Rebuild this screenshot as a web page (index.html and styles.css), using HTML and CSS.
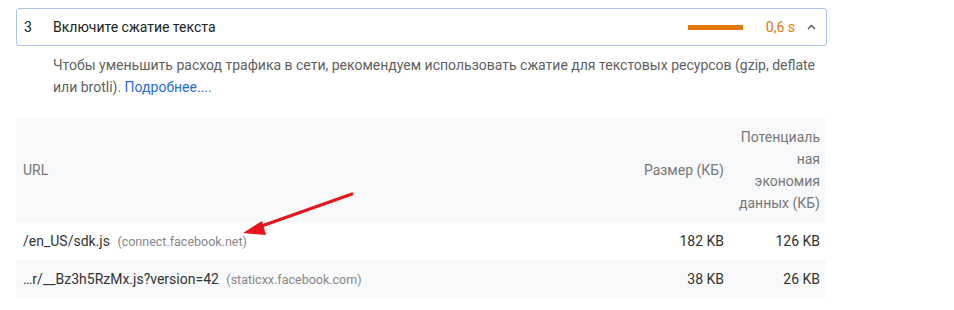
FILE: index.html
```html
<!DOCTYPE html>
<html lang="ru">
<head>
<meta charset="utf-8">
<link rel="stylesheet" href="styles.css">
</head>
<body>
<div class="audit">
  <div class="summary">
    <span class="num">3</span>
    <span class="title">Включите сжатие текста</span>
    <span class="bar"></span>
    <span class="time">0,6 s</span>
    <svg class="chev" width="9" height="6" viewBox="0 0 9 6"><path d="M1 5 L4.5 1.5 L8 5" fill="none" stroke="#555" stroke-width="1.4"/></svg>
  </div>
  <p class="desc">Чтобы уменьшить расход трафика в сети, рекомендуем использовать сжатие для текстовых ресурсов (gzip, deflate или brotli). <a href="#">Подробнее....</a></p>
  <table class="details">
    <colgroup>
      <col class="w-url">
      <col class="w-size">
      <col class="w-save">
    </colgroup>
    <thead>
      <tr>
        <th class="c-url">URL</th>
        <th class="c-size">Размер (КБ)</th>
        <th class="c-save">Потенциальная экономия данных (КБ)</th>
      </tr>
    </thead>
    <tbody>
      <tr>
        <td class="c-url">/en_US/sdk.js <span class="host">(connect.facebook.net)</span></td>
        <td class="c-size">182 KB</td>
        <td class="c-save">126 KB</td>
      </tr>
      <tr class="alt">
        <td class="c-url">…r/__Bz3h5RzMx.js?version=42 <span class="host">(staticxx.facebook.com)</span></td>
        <td class="c-size">38 KB</td>
        <td class="c-save">26 KB</td>
      </tr>
    </tbody>
  </table>
  <svg class="arrow" width="954" height="310" viewBox="0 0 954 310">
    <line x1="352" y1="194" x2="256" y2="228" stroke="#e5161b" stroke-width="3" stroke-linecap="round"/>
    <polygon points="243,233 262,221 266,235" fill="#e5161b"/>
  </svg>
</div>
</body>
</html>
```
FILE: styles.css
```css
html, body {
  margin: 0;
  padding: 0;
  background: #fff;
}
body {
  font-family: Roboto, "Noto Sans", Arial, sans-serif;
  font-size: 14px;
  color: #212121;
}
.audit {
  position: relative;
  width: 811px;
  margin-left: 16px;
  padding-top: 8px;
}
.summary {
  display: flex;
  align-items: center;
  height: 36px;
  border: 1px solid #a9c5ee;
  border-radius: 3px;
  padding: 0 10px 0 7px;
}
.num {
  width: 29px;
  color: #212121;
}
.title {
  flex: 1;
  color: #212121;
}
.bar {
  width: 55px;
  height: 5px;
  background: #e5760a;
  margin-right: 23px;
}
.time {
  color: #e5760a;
  margin-right: 12px;
}
.chev {
  display: block;
}
.desc {
  margin: 8px 0 0 37px;
  line-height: 22px;
  color: #5f5f5f;
  width: 770px;
}
.desc a {
  color: #2a6ed0;
  text-decoration: none;
}
.details {
  margin-top: 20px;
  width: 810px;
  border-collapse: collapse;
  table-layout: fixed;
}
.w-size {
  width: 110px;
}
.w-save {
  width: 95px;
}
.details th {
  font-weight: normal;
  color: #777;
  background: #f8f9fa;
  height: 104px;
  line-height: 22px;
  padding: 0 6px 0 7px;
  overflow-wrap: anywhere;
}
.details td {
  height: 38px;
  padding: 0 6px 0 7px;
  color: #333;
  white-space: nowrap;
}
.details tr.alt td {
  background: #f8f9fa;
}
.details .c-size {
  padding-right: 7px;
}
.details .c-save {
  padding-left: 5px;
}
.c-url {
  text-align: left;
}
.c-size,
.c-save {
  text-align: right;
}
.host {
  color: #888;
  font-size: 12.5px;
  margin-left: 4px;
}
.arrow {
  position: absolute;
  left: -16px;
  top: 0;
  pointer-events: none;
}
```
